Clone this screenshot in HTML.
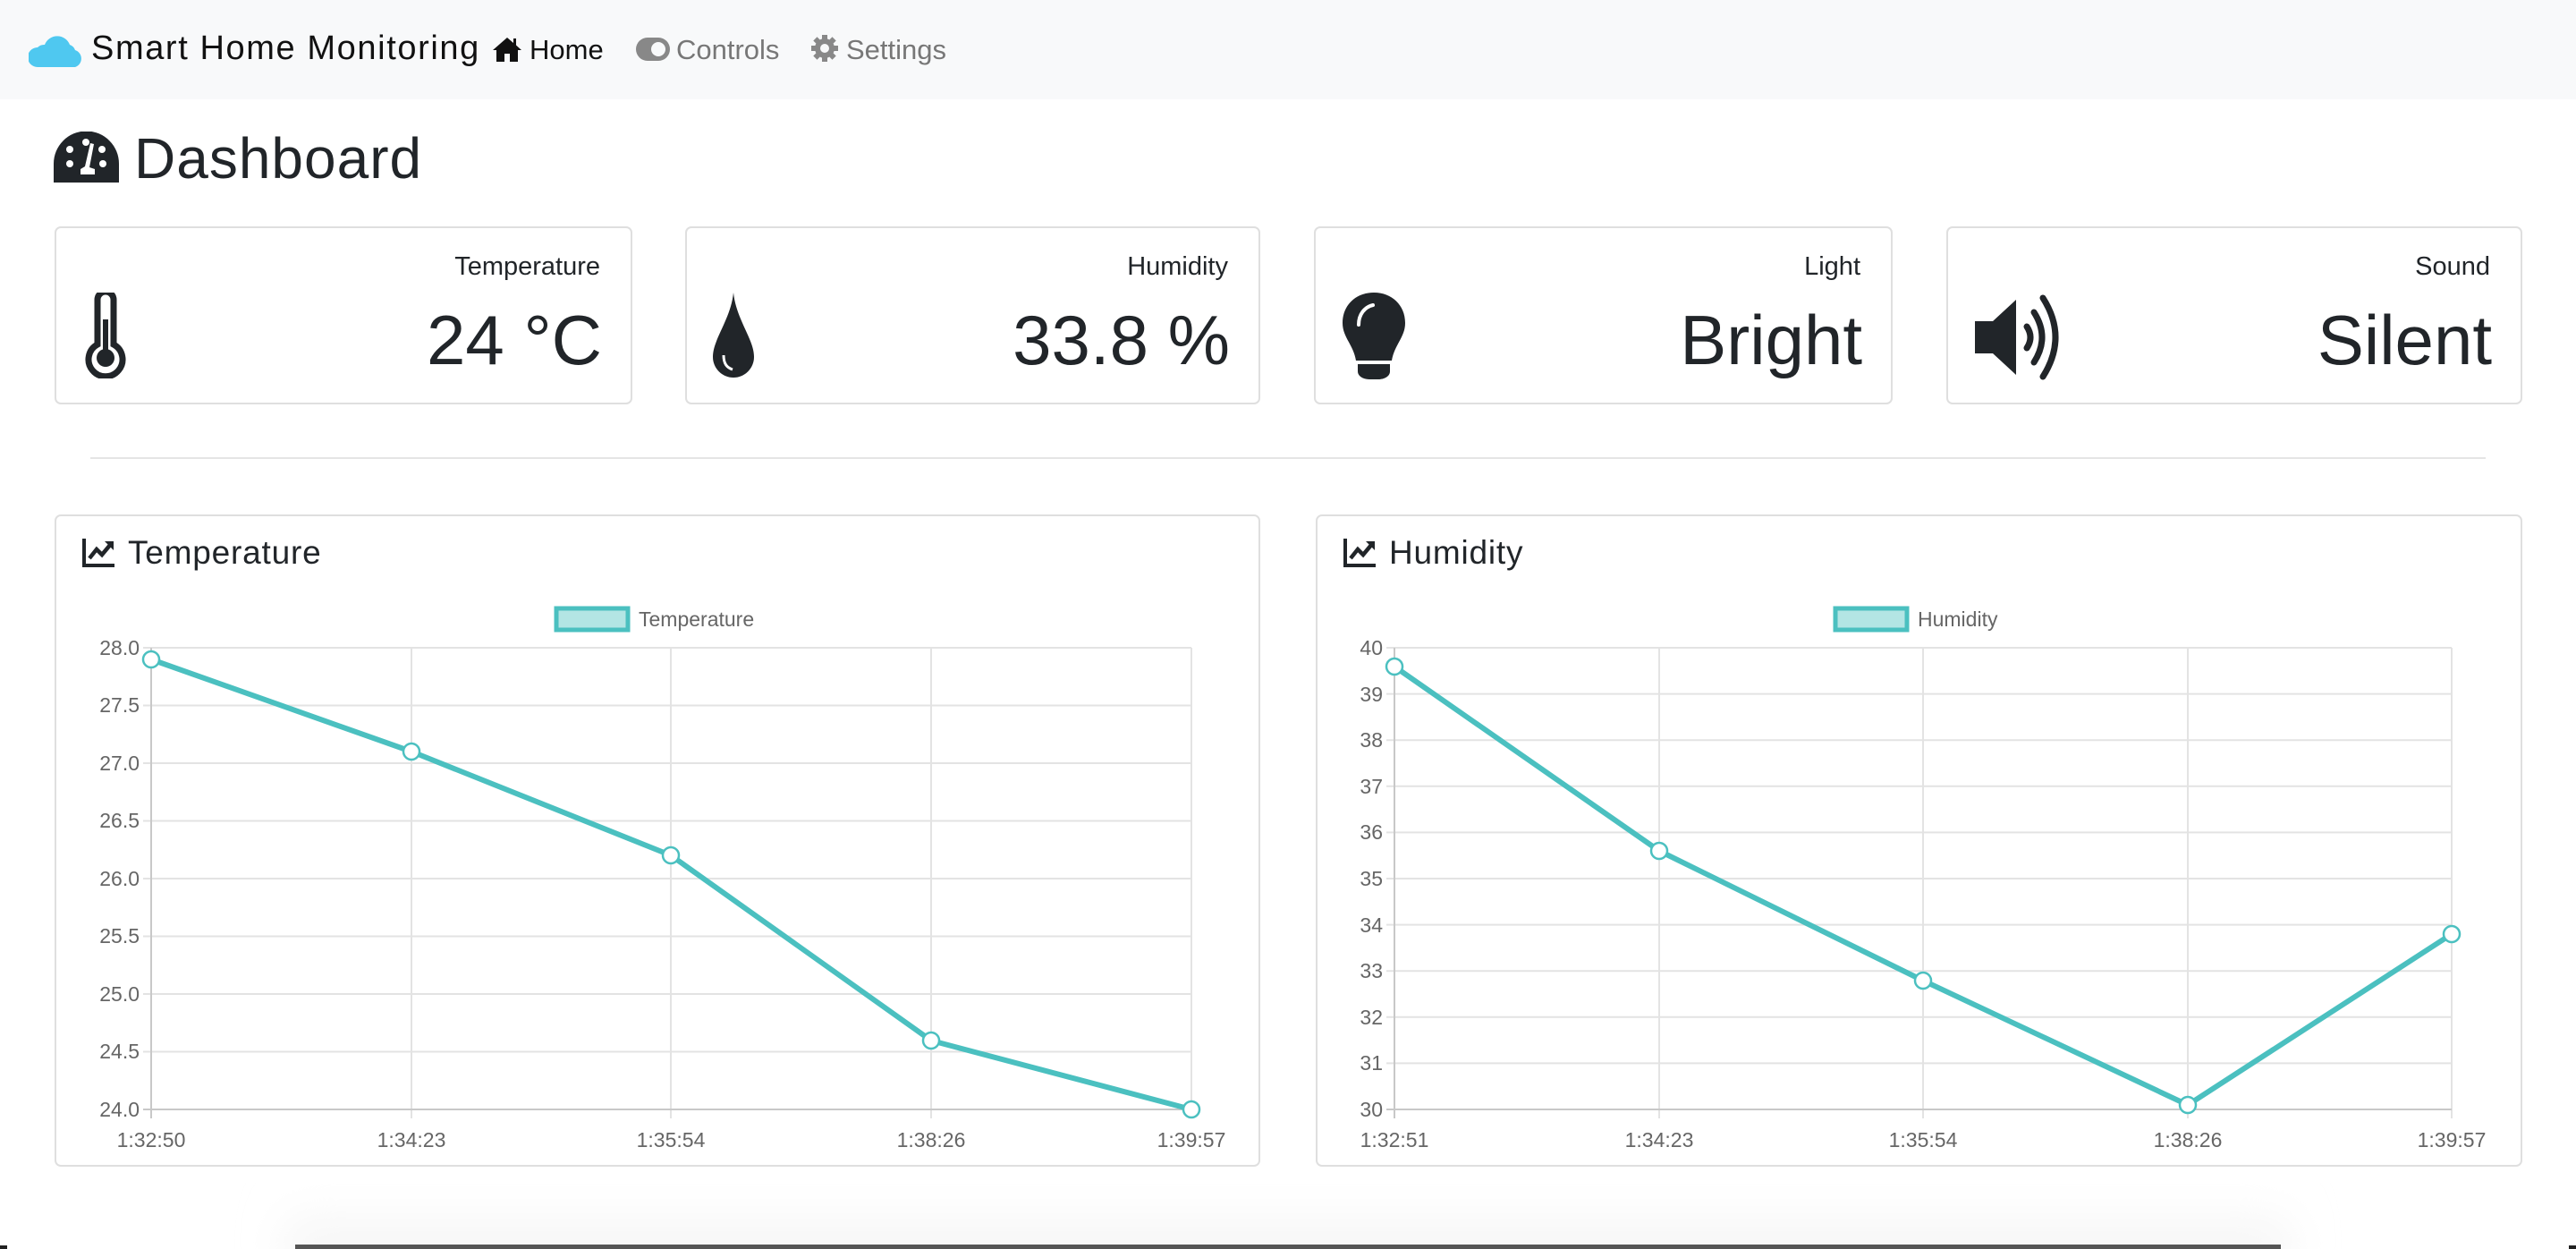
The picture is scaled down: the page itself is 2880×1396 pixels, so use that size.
<!DOCTYPE html>
<html><head><meta charset="utf-8"><style>
*{margin:0;padding:0;box-sizing:border-box}
body{width:2880px;height:1396px;background:#fff;position:relative;overflow:hidden;font-family:"Liberation Sans",sans-serif;color:#212529}
.nav{position:absolute;left:0;top:0;width:2880px;height:111px;background:#f8f9fa}
.abs{position:absolute;white-space:nowrap}
.card{position:absolute;border:2px solid #dfdfdf;border-radius:7px;background:#fff}
.lab{position:absolute;right:34px;top:27px;font-size:29px}
.val{position:absolute;right:32px;top:80px;font-size:78px;line-height:90px}
</style></head><body>
<div class="nav"></div>
<svg class="abs" style="left:32px;top:36px" width="62" height="40" viewBox="0 0 62 40"><path d="M10 39 A10 10 0 0 1 10 17 A10 10 0 0 1 18 14 A15 15 0 0 1 46 14 A10 10 0 0 1 52 20 A10 10 0 0 1 52 39 Z" fill="#4fc8f0"/></svg>
<div class="abs" style="left:102px;top:33px;font-size:38px;letter-spacing:1.6px;color:#111">Smart Home Monitoring</div>
<svg class="abs" style="left:550px;top:40px" width="34" height="30" viewBox="0 0 34 30"><path d="M17 2 L1 16 L5 16 L5 29 L14 29 L14 20 L20 20 L20 29 L29 29 L29 16 L33 16 L27 10.5 L27 3 L24 3 L24 8 Z" fill="#111"/></svg>
<div class="abs" style="left:592px;top:38px;font-size:31px;color:#111">Home</div>
<svg class="abs" style="left:711px;top:42px" width="38" height="26" viewBox="0 0 38 26"><rect x="0" y="0" width="38" height="26" rx="13" fill="#888"/><circle cx="25" cy="13" r="8" fill="#f8f9fa"/></svg>
<div class="abs" style="left:756px;top:38px;font-size:31px;color:#777">Controls</div>
<svg class="abs" style="left:906px;top:38px" width="32" height="32" viewBox="0 0 32 32"><g fill="#888"><circle cx="16" cy="16" r="11"/><rect x="13" y="1" width="6" height="30"/><rect x="1" y="13" width="30" height="6"/><rect x="13" y="1" width="6" height="30" transform="rotate(45 16 16)"/><rect x="13" y="1" width="6" height="30" transform="rotate(-45 16 16)"/></g><circle cx="16" cy="16" r="5" fill="#f8f9fa"/></svg>
<div class="abs" style="left:946px;top:38px;font-size:31px;color:#777">Settings</div>

<svg class="abs" style="left:60px;top:147px" width="73" height="57" viewBox="0 0 73 57"><path d="M0 57 L0 36 A36.5 36.5 0 0 1 73 36 L73 57 Z" fill="#212529"/><g fill="#fff"><circle cx="18" cy="36" r="4"/><circle cx="55" cy="36" r="4"/><circle cx="18" cy="20" r="4"/><circle cx="36" cy="12" r="4"/><circle cx="54" cy="20" r="4"/><path d="M45 14 L40 40 L46 42 L46 48 L30 48 L30 42 L35 39 L41 13 Z"/></g></svg>
<div class="abs" style="left:150px;top:140px;font-size:64px;letter-spacing:1px">Dashboard</div>

<div class="card" style="left:61px;top:253px;width:646px;height:199px"><div class="lab">Temperature</div><div class="val">24 °C</div>
<svg class="abs" style="left:30px;top:72px" width="50" height="96" viewBox="0 0 50 96"><path d="M16 8 A9 9 0 0 1 34 8 L34 58 A19 19 0 1 1 16 58 Z" fill="none" stroke="#212529" stroke-width="7"/><rect x="22" y="30" width="6" height="40" fill="#212529"/><circle cx="25" cy="73" r="10" fill="#212529"/></svg></div>
<div class="card" style="left:766px;top:253px;width:643px;height:199px"><div class="lab">Humidity</div><div class="val">33.8 %</div>
<svg class="abs" style="left:29px;top:72px" width="46" height="96" viewBox="0 0 46 96"><path d="M23 0 C20 30 0 52 0 72 A23 23 0 0 0 46 72 C46 52 26 30 23 0 Z" fill="#212529"/><path d="M12 70 C12 80 16 84 22 86" fill="none" stroke="#fff" stroke-width="3"/></svg></div>
<div class="card" style="left:1469px;top:253px;width:647px;height:199px"><div class="lab">Light</div><div class="val">Bright</div>
<svg class="abs" style="left:30px;top:72px" width="70" height="98" viewBox="0 0 70 98"><path d="M35 0 C15 0 0 14 0 34 C0 50 12 58 15 76 L55 76 C58 58 70 50 70 34 C70 14 55 0 35 0 Z" fill="#212529"/><path d="M17 80 L53 80 L53 88 C53 94 46 97 40 97 L30 97 C24 97 17 94 17 88 Z" fill="#212529"/><path d="M18 36 C18 24 25 16 34 14" fill="none" stroke="#fff" stroke-width="4" stroke-linecap="round"/></svg></div>
<div class="card" style="left:2176px;top:253px;width:644px;height:199px"><div class="lab">Sound</div><div class="val">Silent</div>
<svg class="abs" style="left:30px;top:74px" width="110" height="96" viewBox="0 0 110 96"><path d="M0 30 L20 30 L46 6 L46 90 L20 66 L0 66 Z" fill="#212529"/><path d="M58 36 Q66 48 58 60" fill="none" stroke="#212529" stroke-width="7" stroke-linecap="round"/><path d="M66 20 Q84 48 66 76" fill="none" stroke="#212529" stroke-width="7" stroke-linecap="round"/><path d="M76 4 Q104 48 76 92" fill="none" stroke="#212529" stroke-width="7" stroke-linecap="round"/></svg></div>

<div class="abs" style="left:101px;top:511px;width:2678px;height:2px;background:#e5e5e5"></div>

<div class="card" style="left:61px;top:575px;width:1348px;height:729px"></div>
<div class="card" style="left:1471px;top:575px;width:1349px;height:729px"></div>
<svg class="abs" style="left:92px;top:602px" width="38" height="32" viewBox="0 0 38 32"><path d="M2 0 L2 30 L36 30" fill="none" stroke="#212529" stroke-width="4"/><path d="M8 22 L16 12 L22 18 L32 6" fill="none" stroke="#212529" stroke-width="4.5"/><path d="M25 3 L35 3 L35 13 Z" fill="#212529"/></svg>
<div class="abs" style="left:143px;top:597px;font-size:37px;letter-spacing:0.8px">Temperature</div>
<svg class="abs" style="left:1502px;top:602px" width="38" height="32" viewBox="0 0 38 32"><path d="M2 0 L2 30 L36 30" fill="none" stroke="#212529" stroke-width="4"/><path d="M8 22 L16 12 L22 18 L32 6" fill="none" stroke="#212529" stroke-width="4.5"/><path d="M25 3 L35 3 L35 13 Z" fill="#212529"/></svg>
<div class="abs" style="left:1553px;top:597px;font-size:37px;letter-spacing:0.8px">Humidity</div>

<svg class="abs" style="left:0;top:0" width="2880" height="1396" font-family="Liberation Sans, sans-serif" font-size="23" fill="#666">
<g stroke="#e3e3e3" stroke-width="2">
<line x1="160" y1="724" x2="1332" y2="724"/><line x1="160" y1="788.5" x2="1332" y2="788.5"/><line x1="160" y1="853" x2="1332" y2="853"/><line x1="160" y1="917.5" x2="1332" y2="917.5"/><line x1="160" y1="982" x2="1332" y2="982"/><line x1="160" y1="1046.5" x2="1332" y2="1046.5"/><line x1="160" y1="1111" x2="1332" y2="1111"/><line x1="160" y1="1175.5" x2="1332" y2="1175.5"/>
<line x1="460" y1="724" x2="460" y2="1250"/><line x1="750" y1="724" x2="750" y2="1250"/><line x1="1041" y1="724" x2="1041" y2="1250"/><line x1="1332" y1="724" x2="1332" y2="1250"/>
<line x1="1550" y1="724" x2="2741" y2="724"/><line x1="1550" y1="775.6" x2="2741" y2="775.6"/><line x1="1550" y1="827.2" x2="2741" y2="827.2"/><line x1="1550" y1="878.8" x2="2741" y2="878.8"/><line x1="1550" y1="930.4" x2="2741" y2="930.4"/><line x1="1550" y1="982" x2="2741" y2="982"/><line x1="1550" y1="1033.6" x2="2741" y2="1033.6"/><line x1="1550" y1="1085.2" x2="2741" y2="1085.2"/><line x1="1550" y1="1136.8" x2="2741" y2="1136.8"/><line x1="1550" y1="1188.4" x2="2741" y2="1188.4"/>
<line x1="1855" y1="724" x2="1855" y2="1250"/><line x1="2150" y1="724" x2="2150" y2="1250"/><line x1="2446" y1="724" x2="2446" y2="1250"/><line x1="2741" y1="724" x2="2741" y2="1250"/>
</g>
<g stroke="#c8c8c8" stroke-width="2"><line x1="169" y1="724" x2="169" y2="1250"/><line x1="160" y1="1240" x2="1332" y2="1240"/><line x1="1559" y1="724" x2="1559" y2="1250"/><line x1="1550" y1="1240" x2="2741" y2="1240"/></g>
<g text-anchor="end">
<text x="156" y="732">28.0</text><text x="156" y="796">27.5</text><text x="156" y="861">27.0</text><text x="156" y="925">26.5</text><text x="156" y="990">26.0</text><text x="156" y="1054">25.5</text><text x="156" y="1119">25.0</text><text x="156" y="1183">24.5</text><text x="156" y="1248">24.0</text>
<text x="1546" y="732">40</text><text x="1546" y="784">39</text><text x="1546" y="835">38</text><text x="1546" y="887">37</text><text x="1546" y="938">36</text><text x="1546" y="990">35</text><text x="1546" y="1042">34</text><text x="1546" y="1093">33</text><text x="1546" y="1145">32</text><text x="1546" y="1196">31</text><text x="1546" y="1248">30</text>
</g>
<g text-anchor="middle">
<text x="169" y="1282">1:32:50</text><text x="460" y="1282">1:34:23</text><text x="750" y="1282">1:35:54</text><text x="1041" y="1282">1:38:26</text><text x="1332" y="1282">1:39:57</text>
<text x="1559" y="1282">1:32:51</text><text x="1855" y="1282">1:34:23</text><text x="2150" y="1282">1:35:54</text><text x="2446" y="1282">1:38:26</text><text x="2741" y="1282">1:39:57</text>
</g>
<rect x="622" y="680" width="80" height="24" fill="#b3e5e4" stroke="#4bc0c0" stroke-width="5"/><text x="714" y="700">Temperature</text>
<rect x="2052" y="680" width="80" height="24" fill="#b3e5e4" stroke="#4bc0c0" stroke-width="5"/><text x="2144" y="700">Humidity</text>
<g fill="none" stroke="#4bc0c0" stroke-width="6" stroke-linejoin="round">
<polyline points="169,737 460,840 750,956 1041,1163 1332,1240"/>
<polyline points="1559,745 1855,951 2150,1096 2446,1235 2741,1044"/>
</g>
<g fill="#fff" stroke="#4bc0c0" stroke-width="2.5">
<circle cx="169" cy="737" r="9"/><circle cx="460" cy="840" r="9"/><circle cx="750" cy="956" r="9"/><circle cx="1041" cy="1163" r="9"/><circle cx="1332" cy="1240" r="9"/>
<circle cx="1559" cy="745" r="9"/><circle cx="1855" cy="951" r="9"/><circle cx="2150" cy="1096" r="9"/><circle cx="2446" cy="1235" r="9"/><circle cx="2741" cy="1044" r="9"/>
</g>
<defs><linearGradient id="sh" x1="0" y1="0" x2="0" y2="1"><stop offset="0" stop-color="#fff" stop-opacity="0"/><stop offset="1" stop-color="#ebebeb"/></linearGradient>
<filter id="bl"><feGaussianBlur stdDeviation="25"/></filter></defs>
<rect x="320" y="1330" width="2240" height="80" fill="url(#sh)" filter="url(#bl)"/>
<rect x="330" y="1391" width="2220" height="5" fill="#555"/>
<rect x="0" y="1392" width="8" height="4" fill="#222"/>
<rect x="2872" y="1392" width="8" height="4" fill="#222"/>
</svg>
</body></html>
